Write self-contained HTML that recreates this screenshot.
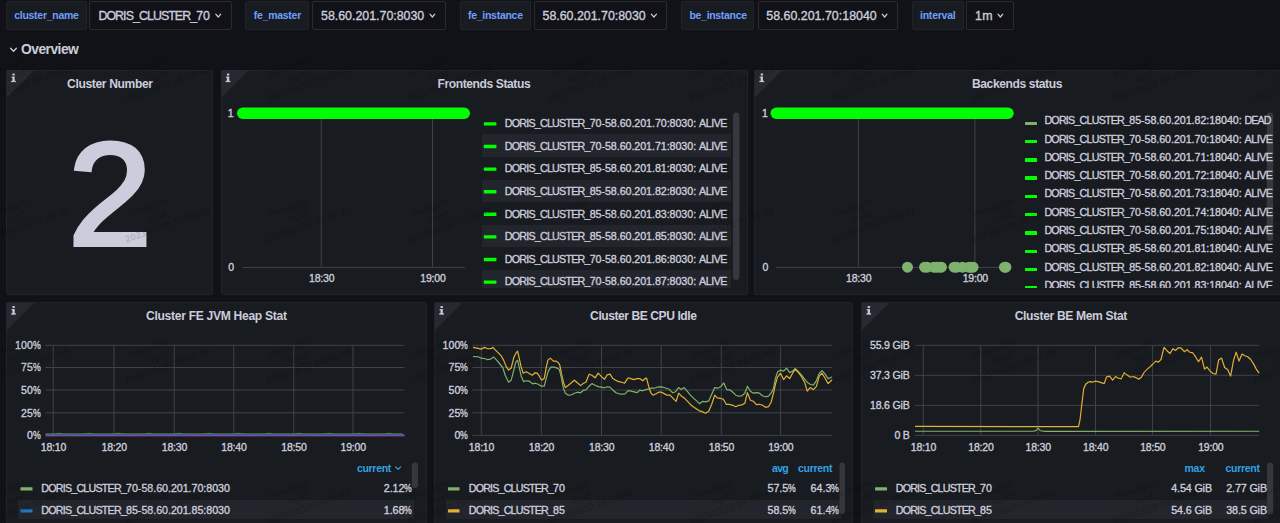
<!DOCTYPE html>
<html lang="en"><head><meta charset="utf-8"><title>Doris Overview</title>
<style>
html,body{margin:0;padding:0;background:#111217}
body{width:1280px;height:523px;overflow:hidden;position:relative;font-family:"Liberation Sans",Arial,sans-serif;color:#ccccdc}
.t{position:absolute;white-space:pre;margin:0;padding:0}
.t.c{width:400px;text-align:center}
.t span{display:inline-block}
.t span.pc{transform-origin:0 50%}
svg.ov{position:absolute;left:0;top:0;width:1280px;height:523px;pointer-events:none}
.wm{position:absolute;width:120px;height:34.5px;text-align:center;transform:rotate(-19.7deg);color:rgba(0,0,0,.14);font-size:9.6px;line-height:11.5px;white-space:nowrap;pointer-events:none}
.wm b{display:block;position:relative}
#be{position:absolute;left:1020px;top:105px;width:260px;height:182.6px;overflow:hidden}

.f0{font-size:10.5px;height:16px;line-height:16px;font-weight:700;color:#6e9fff}
.f1{font-size:12.4px;height:16px;line-height:16px;-webkit-text-stroke:0.35px currentColor}
.f2{font-size:13.8px;height:18px;line-height:18px;font-weight:700}
.f3{font-size:12.1px;height:16px;line-height:16px;font-weight:700}
.f4{font-size:146.5px;height:160px;line-height:160px;-webkit-text-stroke:4px currentColor}
.f5{font-size:10.5px;height:16px;line-height:16px;-webkit-text-stroke:0.35px currentColor}
.f6{font-size:10.7px;height:16px;line-height:16px;-webkit-text-stroke:0.35px currentColor}
.f7{font-size:10.5px;height:16px;line-height:16px;font-weight:700;color:#33a2e5}
</style></head>
<body>
<div style="position:absolute;left:5.65px;top:1.25px;width:81.05px;height:28.50px;box-sizing:border-box;background:#181b1f;border:1px solid #202329;border-radius:2px"></div>
<div style="position:absolute;left:89.40px;top:1.25px;width:142.60px;height:28.50px;box-sizing:border-box;background:#111217;border:1px solid #292b31;border-radius:2px"></div>
<div style="position:absolute;left:244.90px;top:1.25px;width:64.10px;height:28.50px;box-sizing:border-box;background:#181b1f;border:1px solid #202329;border-radius:2px"></div>
<div style="position:absolute;left:311.90px;top:1.25px;width:134.60px;height:28.50px;box-sizing:border-box;background:#111217;border:1px solid #292b31;border-radius:2px"></div>
<div style="position:absolute;left:459.90px;top:1.25px;width:70.85px;height:28.50px;box-sizing:border-box;background:#181b1f;border:1px solid #202329;border-radius:2px"></div>
<div style="position:absolute;left:533.65px;top:1.25px;width:133.85px;height:28.50px;box-sizing:border-box;background:#111217;border:1px solid #292b31;border-radius:2px"></div>
<div style="position:absolute;left:681.15px;top:1.25px;width:73.35px;height:28.50px;box-sizing:border-box;background:#181b1f;border:1px solid #202329;border-radius:2px"></div>
<div style="position:absolute;left:757.65px;top:1.25px;width:140.85px;height:28.50px;box-sizing:border-box;background:#111217;border:1px solid #292b31;border-radius:2px"></div>
<div style="position:absolute;left:911.90px;top:1.25px;width:51.85px;height:28.50px;box-sizing:border-box;background:#181b1f;border:1px solid #202329;border-radius:2px"></div>
<div style="position:absolute;left:965.90px;top:1.25px;width:47.85px;height:28.50px;box-sizing:border-box;background:#111217;border:1px solid #292b31;border-radius:2px"></div>
<div style="position:absolute;left:6.00px;top:69.60px;width:207.00px;height:225.80px;box-sizing:border-box;background:#181b1f;border:1px solid #202328;border-radius:2px"></div>
<div style="position:absolute;left:220.50px;top:69.60px;width:527.00px;height:225.80px;box-sizing:border-box;background:#181b1f;border:1px solid #202328;border-radius:2px"></div>
<div style="position:absolute;left:754.25px;top:69.60px;width:535.75px;height:225.80px;box-sizing:border-box;background:#181b1f;border:1px solid #202328;border-radius:2px"></div>
<div style="position:absolute;left:6.00px;top:302.10px;width:421.00px;height:257.90px;box-sizing:border-box;background:#181b1f;border:1px solid #202328;border-radius:2px"></div>
<div style="position:absolute;left:434.10px;top:302.10px;width:419.15px;height:257.90px;box-sizing:border-box;background:#181b1f;border:1px solid #202328;border-radius:2px"></div>
<div style="position:absolute;left:861.25px;top:302.10px;width:428.75px;height:257.90px;box-sizing:border-box;background:#181b1f;border:1px solid #202328;border-radius:2px"></div>
<div style="position:absolute;left:482.20px;top:134.40px;width:249.10px;height:22.60px;background:#22252b"></div>
<div style="position:absolute;left:482.20px;top:179.60px;width:249.10px;height:22.60px;background:#22252b"></div>
<div style="position:absolute;left:482.20px;top:224.80px;width:249.10px;height:22.60px;background:#22252b"></div>
<div style="position:absolute;left:482.20px;top:270.00px;width:249.10px;height:17.80px;background:#22252b"></div>
<div style="position:absolute;left:18.00px;top:500.30px;width:395.75px;height:19.20px;background:#22252b"></div>
<div style="position:absolute;left:445.50px;top:500.30px;width:395.00px;height:19.20px;background:#22252b"></div>
<div style="position:absolute;left:873.00px;top:500.30px;width:394.50px;height:19.20px;background:#22252b"></div>
<svg class="ov" viewBox="0 0 1280 523">
<path d="M215.75 14.20 L218.25 17.00 L220.75 14.20" fill="none" stroke="#ccccdc" stroke-width="1.2" stroke-linecap="round" stroke-linejoin="round"/>
<path d="M430.00 14.20 L432.38 17.00 L434.75 14.20" fill="none" stroke="#ccccdc" stroke-width="1.2" stroke-linecap="round" stroke-linejoin="round"/>
<path d="M651.25 14.20 L653.88 17.00 L656.50 14.20" fill="none" stroke="#ccccdc" stroke-width="1.2" stroke-linecap="round" stroke-linejoin="round"/>
<path d="M882.25 14.20 L884.62 17.00 L887.00 14.20" fill="none" stroke="#ccccdc" stroke-width="1.2" stroke-linecap="round" stroke-linejoin="round"/>
<path d="M998.00 14.20 L1000.38 17.00 L1002.75 14.20" fill="none" stroke="#ccccdc" stroke-width="1.2" stroke-linecap="round" stroke-linejoin="round"/>
<path d="M10.6 48.3 L13.5 51.3 L16.4 48.3" fill="none" stroke="#ccccdc" stroke-width="1.3" stroke-linecap="round" stroke-linejoin="round"/>
<path d="M6.50 70.10 h28 l-28 28 z" fill="#262930"/>
<g fill="#c7c8d4" transform="translate(11.10 73.40)"><rect x="1.3" y="0" width="2.4" height="2.2" rx="0.6"/><rect x="0.3" y="3.3" width="3.3" height="1.1"/><rect x="1.3" y="3.3" width="2.3" height="5"/><rect x="0" y="7.4" width="4.8" height="1.3"/></g>
<path d="M221.00 70.10 h28 l-28 28 z" fill="#262930"/>
<g fill="#c7c8d4" transform="translate(225.60 73.40)"><rect x="1.3" y="0" width="2.4" height="2.2" rx="0.6"/><rect x="0.3" y="3.3" width="3.3" height="1.1"/><rect x="1.3" y="3.3" width="2.3" height="5"/><rect x="0" y="7.4" width="4.8" height="1.3"/></g>
<path d="M754.75 70.10 h28 l-28 28 z" fill="#262930"/>
<g fill="#c7c8d4" transform="translate(759.35 73.40)"><rect x="1.3" y="0" width="2.4" height="2.2" rx="0.6"/><rect x="0.3" y="3.3" width="3.3" height="1.1"/><rect x="1.3" y="3.3" width="2.3" height="5"/><rect x="0" y="7.4" width="4.8" height="1.3"/></g>
<path d="M6.50 302.60 h28 l-28 28 z" fill="#262930"/>
<g fill="#c7c8d4" transform="translate(11.10 305.90)"><rect x="1.3" y="0" width="2.4" height="2.2" rx="0.6"/><rect x="0.3" y="3.3" width="3.3" height="1.1"/><rect x="1.3" y="3.3" width="2.3" height="5"/><rect x="0" y="7.4" width="4.8" height="1.3"/></g>
<path d="M434.60 302.60 h28 l-28 28 z" fill="#262930"/>
<g fill="#c7c8d4" transform="translate(439.20 305.90)"><rect x="1.3" y="0" width="2.4" height="2.2" rx="0.6"/><rect x="0.3" y="3.3" width="3.3" height="1.1"/><rect x="1.3" y="3.3" width="2.3" height="5"/><rect x="0" y="7.4" width="4.8" height="1.3"/></g>
<path d="M861.75 302.60 h28 l-28 28 z" fill="#262930"/>
<g fill="#c7c8d4" transform="translate(866.35 305.90)"><rect x="1.3" y="0" width="2.4" height="2.2" rx="0.6"/><rect x="0.3" y="3.3" width="3.3" height="1.1"/><rect x="1.3" y="3.3" width="2.3" height="5"/><rect x="0" y="7.4" width="4.8" height="1.3"/></g>
<rect x="320.75" y="113" width="1" height="154.5" fill="#3f4247"/>
<rect x="432.00" y="113" width="1" height="154.5" fill="#3f4247"/>
<rect x="242.20" y="266.9" width="222.80" height="1" fill="#3f4247"/>
<rect x="237.00" y="107.5" width="233.00" height="11.5" rx="5.75" fill="#00ff00"/>
<rect x="857.80" y="113" width="1" height="154.5" fill="#3f4247"/>
<rect x="974.40" y="113" width="1" height="154.5" fill="#3f4247"/>
<rect x="775.70" y="266.9" width="233.05" height="1" fill="#3f4247"/>
<rect x="770.50" y="107.5" width="243.25" height="11.5" rx="5.75" fill="#00ff00"/>
<rect x="483.8" y="122.20" width="12.6" height="3.4" rx="0.5" fill="#00ff00"/>
<rect x="483.8" y="144.80" width="12.6" height="3.4" rx="0.5" fill="#00ff00"/>
<rect x="483.8" y="167.40" width="12.6" height="3.4" rx="0.5" fill="#00ff00"/>
<rect x="483.8" y="190.00" width="12.6" height="3.4" rx="0.5" fill="#00ff00"/>
<rect x="483.8" y="212.60" width="12.6" height="3.4" rx="0.5" fill="#00ff00"/>
<rect x="483.8" y="235.20" width="12.6" height="3.4" rx="0.5" fill="#00ff00"/>
<rect x="483.8" y="257.80" width="12.6" height="3.4" rx="0.5" fill="#00ff00"/>
<rect x="483.8" y="280.40" width="12.6" height="3.4" rx="0.5" fill="#00ff00"/>
<rect x="733" y="112.5" width="6.4" height="167.4" rx="3.2" fill="#35383d"/>
<circle cx="907.50" cy="267.2" r="5.5" fill="#7eb26d"/>
<circle cx="924.60" cy="267.2" r="5.5" fill="#7eb26d"/>
<circle cx="927.20" cy="267.2" r="5.5" fill="#7eb26d"/>
<circle cx="933.80" cy="267.2" r="5.5" fill="#7eb26d"/>
<circle cx="936.40" cy="267.2" r="5.5" fill="#7eb26d"/>
<circle cx="939.00" cy="267.2" r="5.5" fill="#7eb26d"/>
<circle cx="941.40" cy="267.2" r="5.5" fill="#7eb26d"/>
<circle cx="954.10" cy="267.2" r="5.5" fill="#7eb26d"/>
<circle cx="956.70" cy="267.2" r="5.5" fill="#7eb26d"/>
<circle cx="962.60" cy="267.2" r="5.5" fill="#7eb26d"/>
<circle cx="968.80" cy="267.2" r="5.5" fill="#7eb26d"/>
<circle cx="971.00" cy="267.2" r="5.5" fill="#7eb26d"/>
<circle cx="973.10" cy="267.2" r="5.5" fill="#7eb26d"/>
<circle cx="1004.50" cy="267.2" r="5.5" fill="#7eb26d"/>
<circle cx="1005.90" cy="267.2" r="5.5" fill="#7eb26d"/>
<rect x="1266.8" y="112.5" width="6.4" height="128.4" rx="3.2" fill="#35383d"/>
<rect x="45.50" y="344.80" width="359.00" height="1" fill="#3f4247"/>
<rect x="45.50" y="367.00" width="359.00" height="1" fill="#3f4247"/>
<rect x="45.50" y="389.50" width="359.00" height="1" fill="#3f4247"/>
<rect x="45.50" y="412.30" width="359.00" height="1" fill="#3f4247"/>
<rect x="45.50" y="434.90" width="359.00" height="1" fill="#3f4247"/>
<rect x="52.75" y="345.30" width="1" height="90.10" fill="#3f4247"/>
<rect x="113.50" y="345.30" width="1" height="90.10" fill="#3f4247"/>
<rect x="173.75" y="345.30" width="1" height="90.10" fill="#3f4247"/>
<rect x="233.25" y="345.30" width="1" height="90.10" fill="#3f4247"/>
<rect x="293.25" y="345.30" width="1" height="90.10" fill="#3f4247"/>
<rect x="352.50" y="345.30" width="1" height="90.10" fill="#3f4247"/>
<rect x="472.50" y="344.80" width="359.50" height="1" fill="#3f4247"/>
<rect x="472.50" y="367.00" width="359.50" height="1" fill="#3f4247"/>
<rect x="472.50" y="389.50" width="359.50" height="1" fill="#3f4247"/>
<rect x="472.50" y="412.30" width="359.50" height="1" fill="#3f4247"/>
<rect x="472.50" y="434.90" width="359.50" height="1" fill="#3f4247"/>
<rect x="480.80" y="345.30" width="1" height="90.10" fill="#3f4247"/>
<rect x="540.80" y="345.30" width="1" height="90.10" fill="#3f4247"/>
<rect x="601.00" y="345.30" width="1" height="90.10" fill="#3f4247"/>
<rect x="660.70" y="345.30" width="1" height="90.10" fill="#3f4247"/>
<rect x="720.80" y="345.30" width="1" height="90.10" fill="#3f4247"/>
<rect x="780.10" y="345.30" width="1" height="90.10" fill="#3f4247"/>
<rect x="915.00" y="344.80" width="344.25" height="1" fill="#3f4247"/>
<rect x="915.00" y="374.80" width="344.25" height="1" fill="#3f4247"/>
<rect x="915.00" y="404.90" width="344.25" height="1" fill="#3f4247"/>
<rect x="915.00" y="434.90" width="344.25" height="1" fill="#3f4247"/>
<rect x="922.75" y="345.30" width="1" height="90.10" fill="#3f4247"/>
<rect x="980.25" y="345.30" width="1" height="90.10" fill="#3f4247"/>
<rect x="1037.50" y="345.30" width="1" height="90.10" fill="#3f4247"/>
<rect x="1095.00" y="345.30" width="1" height="90.10" fill="#3f4247"/>
<rect x="1152.10" y="345.30" width="1" height="90.10" fill="#3f4247"/>
<rect x="1210.10" y="345.30" width="1" height="90.10" fill="#3f4247"/>
<path d="M45.5 433.9 L48.5 433.9 L51.5 433.9 L54.5 433.9 L57.5 433.4 L60.5 433.4 L63.5 433.9 L66.5 433.9 L69.5 433.9 L72.5 433.9 L75.5 433.9 L78.5 433.9 L81.5 433.9 L84.5 433.9 L87.5 433.4 L90.5 433.4 L93.5 433.9 L96.5 433.9 L99.5 433.9 L102.5 433.9 L105.5 433.9 L108.5 433.9 L111.5 433.9 L114.5 433.9 L117.5 433.4 L120.5 433.4 L123.5 433.9 L126.5 433.9 L129.5 433.9 L132.5 433.9 L135.5 433.9 L138.5 433.9 L141.5 433.9 L144.5 433.9 L147.5 433.4 L150.5 433.4 L153.5 433.9 L156.5 433.9 L159.5 433.9 L162.5 433.9 L165.5 433.9 L168.5 433.9 L171.5 433.9 L174.5 433.9 L177.5 433.4 L180.5 433.4 L183.5 433.9 L186.5 433.9 L189.5 433.9 L192.5 433.9 L195.5 433.9 L198.5 433.9 L201.5 433.9 L204.5 433.9 L207.5 433.4 L210.5 433.4 L213.5 433.9 L216.5 433.9 L219.5 433.9 L222.5 433.9 L225.5 433.9 L228.5 433.9 L231.5 433.9 L234.5 433.9 L237.5 433.4 L240.5 433.4 L243.5 433.9 L246.5 433.9 L249.5 433.9 L252.5 433.9 L255.5 433.9 L258.5 433.9 L261.5 433.9 L264.5 433.9 L267.5 433.4 L270.5 433.4 L273.5 433.9 L276.5 433.9 L279.5 433.9 L282.5 433.9 L285.5 433.9 L288.5 433.9 L291.5 433.9 L294.5 433.9 L297.5 433.4 L300.5 433.4 L303.5 433.9 L306.5 433.9 L309.5 433.9 L312.5 433.9 L315.5 433.9 L318.5 433.9 L321.5 433.9 L324.5 433.9 L327.5 433.4 L330.5 433.4 L333.5 433.9 L336.5 433.9 L339.5 433.9 L342.5 433.9 L345.5 433.9 L348.5 433.9 L351.5 433.9 L354.5 433.9 L357.5 433.4 L360.5 433.4 L363.5 433.9 L366.5 433.9 L369.5 433.9 L372.5 433.9 L375.5 433.9 L378.5 433.9 L381.5 433.9 L384.5 433.9 L387.5 433.4 L390.5 433.4 L393.5 433.9 L396.5 433.9 L399.5 433.9 L402.5 433.9" stroke="#5f9c6e" stroke-width="0.9" fill="none"/>
<path d="M45.5 434.7 L404.5 434.7" stroke="#1f78c1" stroke-width="1.1" fill="none"/>
<path d="M45.5 435.8 L404.5 435.8" stroke="#ba43a9" stroke-width="1" fill="none"/>
<path d="M473.0 356.7 L478.1 356.7 L481.1 358.1 L484.5 358.5 L487.7 359.7 L490.7 359.1 L493.7 357.1 L496.7 360.1 L499.5 363.5 L502.8 367.5 L505.2 375.2 L508.6 382.2 L511.2 380.2 L513.8 370.1 L515.8 362.1 L517.6 360.1 L519.2 367.1 L521.2 376.2 L523.6 381.6 L526.2 380.8 L529.3 381.2 L532.7 383.8 L535.3 383.2 L538.3 384.2 L541.3 386.2 L544.3 386.2 L546.3 378.2 L548.3 371.1 L550.9 367.1 L554.0 367.1 L557.0 368.1 L559.4 369.5 L561.4 378.2 L563.4 388.2 L565.4 393.2 L568.4 395.2 L571.4 394.8 L574.4 393.2 L577.4 392.2 L580.5 392.8 L583.5 390.2 L585.9 389.8 L589.1 386.2 L591.9 383.6 L595.1 385.2 L598.1 386.6 L601.5 387.2 L604.6 387.8 L607.2 386.8 L610.0 387.2 L613.0 390.2 L616.0 392.8 L619.0 393.8 L622.0 394.2 L625.0 393.8 L628.1 390.6 L631.1 391.2 L634.1 391.8 L637.1 392.6 L639.7 390.2 L642.7 390.8 L645.7 389.6 L645.0 389.8 L648.0 389.2 L651.0 388.2 L654.0 388.2 L657.0 387.2 L660.1 386.8 L663.1 387.2 L666.1 388.2 L669.1 389.2 L672.7 392.8 L675.5 391.8 L678.5 387.6 L681.1 389.6 L684.2 387.6 L687.2 391.2 L690.2 394.8 L693.2 397.9 L696.6 400.9 L699.6 403.7 L702.6 401.3 L705.6 401.9 L708.7 400.9 L711.7 394.2 L714.7 387.6 L717.7 388.2 L720.7 386.8 L723.7 382.8 L726.7 389.6 L729.7 389.8 L732.8 392.2 L735.8 395.2 L738.8 396.2 L741.8 395.8 L744.8 393.2 L747.4 386.2 L750.4 391.2 L753.4 393.2 L756.4 392.6 L759.5 393.2 L762.5 395.8 L765.5 396.8 L768.5 396.2 L771.1 393.2 L773.5 388.2 L775.5 378.2 L777.5 372.1 L780.5 370.1 L783.6 371.1 L786.6 368.1 L789.6 372.6 L792.6 371.1 L795.2 368.5 L798.0 371.1 L801.2 374.6 L804.6 379.2 L807.2 382.2 L810.1 384.2 L813.3 385.2 L816.3 380.8 L819.3 373.2 L822.1 370.7 L825.1 374.2 L828.1 378.6 L831.1 377.6 L832.1 376.8" fill="none" stroke="#7eb26d" stroke-width="1.2" stroke-linejoin="round"/>
<path d="M473.0 347.4 L477.0 348.1 L481.1 349.1 L484.5 347.4 L487.7 348.7 L490.7 348.7 L493.1 347.4 L495.5 350.1 L498.1 352.7 L501.1 355.7 L503.6 360.1 L506.0 366.1 L508.6 370.1 L511.2 368.1 L513.8 357.5 L516.2 352.7 L517.6 351.1 L519.2 358.1 L521.2 367.1 L523.2 373.2 L526.2 371.7 L529.3 373.6 L532.3 375.2 L534.9 372.8 L537.3 373.2 L539.3 376.2 L541.7 380.2 L544.3 378.2 L546.3 367.1 L547.9 360.1 L550.3 358.1 L553.4 361.1 L555.8 361.1 L558.4 362.7 L559.8 365.1 L561.4 373.2 L563.4 382.2 L565.4 387.6 L568.4 385.2 L571.4 382.8 L574.4 380.2 L577.4 382.8 L580.5 385.6 L583.5 383.2 L585.9 382.2 L589.1 374.2 L591.9 375.2 L595.1 377.8 L598.1 373.2 L601.5 376.6 L604.6 379.2 L607.2 374.8 L610.0 374.2 L612.6 378.2 L615.6 380.2 L618.6 381.6 L621.6 382.2 L624.6 383.2 L628.1 377.8 L630.7 378.6 L633.7 379.6 L636.7 378.6 L639.7 378.6 L642.7 380.8 L645.7 378.2 L645.0 378.6 L646.6 378.2 L648.6 386.2 L651.0 393.2 L653.0 395.2 L656.0 393.8 L658.7 392.2 L661.5 392.2 L664.1 393.6 L667.1 395.2 L670.1 395.2 L673.1 398.3 L676.1 401.3 L678.7 393.2 L681.5 396.2 L684.6 398.3 L687.6 401.3 L690.6 404.7 L693.6 406.9 L696.6 408.9 L699.6 410.9 L702.6 411.9 L705.6 413.3 L708.7 411.3 L711.7 404.3 L714.7 395.2 L717.3 397.9 L720.3 398.3 L723.3 399.3 L726.3 404.3 L729.3 404.3 L732.8 405.3 L735.8 406.7 L738.8 405.3 L741.8 404.9 L744.8 403.3 L747.4 392.6 L750.4 400.3 L753.4 401.3 L756.4 404.7 L759.5 404.3 L762.5 405.3 L765.5 407.3 L768.5 406.7 L771.1 402.3 L773.5 393.2 L775.5 384.2 L777.5 377.2 L780.5 373.2 L783.6 379.6 L786.6 375.8 L789.6 378.6 L792.6 373.2 L795.2 369.5 L798.0 372.1 L801.2 376.2 L804.6 382.2 L807.2 391.2 L810.1 387.6 L813.3 389.6 L816.3 386.6 L819.3 376.2 L822.1 373.2 L825.1 378.2 L828.1 383.6 L831.1 380.8 L832.1 379.6" fill="none" stroke="#e2b036" stroke-width="1.2" stroke-linejoin="round"/>
<path d="M915.0 431.3 L1033.0 431.3 L1036.0 430.6 L1038.0 428.2 L1040.5 430.8 L1045.0 431.4 L1259.2 431.3" fill="none" stroke="#7eb26d" stroke-width="1.1" stroke-linejoin="round"/>
<path d="M915.0 426.3 L1078.5 426.7 L1080.1 419.3 L1081.7 405.3 L1083.7 388.8 L1085.7 384.2 L1088.1 382.2 L1090.1 381.6 L1092.5 382.2 L1095.1 381.2 L1098.1 381.6 L1101.1 382.6 L1104.2 383.6 L1106.6 376.8 L1109.6 376.1 L1112.6 380.2 L1115.6 376.5 L1118.2 378.2 L1121.2 378.8 L1124.2 372.7 L1127.2 375.1 L1130.3 377.2 L1133.3 376.5 L1135.9 377.6 L1138.7 379.2 L1141.3 377.2 L1144.3 372.1 L1147.3 369.1 L1150.3 366.5 L1153.3 363.7 L1155.9 361.1 L1158.4 362.1 L1161.0 359.5 L1164.0 347.4 L1167.0 350.7 L1170.0 353.5 L1173.0 348.6 L1175.4 350.5 L1178.4 347.6 L1181.0 348.0 L1184.4 351.7 L1187.1 349.7 L1190.1 352.5 L1192.5 352.7 L1195.5 356.7 L1198.5 361.7 L1201.5 357.1 L1204.5 369.1 L1207.1 367.1 L1210.1 371.1 L1213.0 373.5 L1216.0 374.1 L1218.6 360.1 L1221.6 358.1 L1224.6 367.5 L1227.6 369.5 L1230.6 376.1 L1233.6 360.1 L1236.2 352.1 L1239.0 361.1 L1242.1 354.1 L1244.7 355.7 L1247.7 356.7 L1250.7 359.5 L1253.7 364.1 L1256.3 369.1 L1259.1 373.1" fill="none" stroke="#e2b036" stroke-width="1.2" stroke-linejoin="round"/>
<rect x="20.50" y="487.20" width="12.00" height="3.4" rx="0.5" fill="#7eb26d"/>
<rect x="20.50" y="509.20" width="12.00" height="3.4" rx="0.5" fill="#1f78c1"/>
<rect x="411.75" y="462.50" width="6.25" height="25.50" rx="2.7" fill="#34373c"/>
<path d="M395.6 466.9 L398.1 469.4 L400.6 466.9" fill="none" stroke="#33a2e5" stroke-width="1.2" stroke-linecap="round" stroke-linejoin="round"/>
<rect x="448.00" y="487.20" width="11.50" height="3.4" rx="0.5" fill="#7eb26d"/>
<rect x="448.00" y="509.20" width="11.50" height="3.4" rx="0.5" fill="#e2b036"/>
<rect x="839.50" y="462.50" width="5.50" height="51.50" rx="2.7" fill="#34373c"/>
<rect x="875.00" y="487.20" width="12.00" height="3.4" rx="0.5" fill="#7eb26d"/>
<rect x="875.00" y="509.20" width="12.00" height="3.4" rx="0.5" fill="#e2b036"/>
<rect x="1267.00" y="462.50" width="6.20" height="52.00" rx="2.7" fill="#34373c"/>
</svg>
<div class="t f0" style="top:6.50px;left:14.20px"><span style="letter-spacing:-0.273px">cluster_name</span></div>
<div class="t f1" style="top:7.60px;left:98.40px"><span style="letter-spacing:-0.935px">DORIS_CLUSTER_</span><span style="letter-spacing:0.035px">70</span></div>
<div class="t f0" style="top:6.50px;left:253.75px"><span style="letter-spacing:-0.266px">fe_master</span></div>
<div class="t f1" style="top:7.60px;left:321.00px"><span style="letter-spacing:-0.007px">58.60.201.70:8030</span></div>
<div class="t f0" style="top:6.50px;left:468.00px"><span style="letter-spacing:-0.278px">fe_instance</span></div>
<div class="t f1" style="top:7.60px;left:542.50px"><span style="letter-spacing:-0.007px">58.60.201.70:8030</span></div>
<div class="t f0" style="top:6.50px;left:689.50px"><span style="letter-spacing:-0.320px">be_instance</span></div>
<div class="t f1" style="top:7.60px;left:766.25px"><span style="letter-spacing:0.015px">58.60.201.70:18040</span></div>
<div class="t f0" style="top:6.50px;left:920.00px"><span style="letter-spacing:-0.230px">interval</span></div>
<div class="t f1" style="top:7.60px;left:975.00px"><span style="letter-spacing:0.281px">1m</span></div>
<div class="t f2" style="top:41.10px;left:21.10px"><span style="letter-spacing:-0.523px">Overview</span></div>
<div class="t f3 c" style="top:75.80px;left:-90.18px"><span style="letter-spacing:-0.364px">Cluster Number</span></div>
<div class="t f3 c" style="top:75.80px;left:283.89px"><span style="letter-spacing:-0.414px">Frontends Status</span></div>
<div class="t f3 c" style="top:75.80px;left:817.00px"><span style="letter-spacing:-0.402px">Backends status</span></div>
<div class="t f3 c" style="top:308.30px;left:16.35px"><span style="letter-spacing:-0.298px">Cluster FE JVM Heap Stat</span></div>
<div class="t f3 c" style="top:308.30px;left:443.27px"><span style="letter-spacing:-0.454px">Cluster BE CPU Idle</span></div>
<div class="t f3 c" style="top:308.30px;left:870.82px"><span style="letter-spacing:-0.353px">Cluster BE Mem Stat</span></div>
<div class="t f4 c" style="top:114.20px;left:-90.40px;transform:scaleX(1.03)"><span>2</span></div>
<div class="t f5" style="top:105.20px;right:1046.40px"><span>1</span></div>
<div class="t f5" style="top:259.00px;right:1045.90px"><span>0</span></div>
<div class="t f5 c" style="top:270.10px;left:121.65px"><span style="letter-spacing:-0.195px">18:30</span></div>
<div class="t f5 c" style="top:270.10px;left:232.90px"><span style="letter-spacing:-0.195px">19:00</span></div>
<div class="t f5" style="top:105.20px;right:512.20px"><span>1</span></div>
<div class="t f5" style="top:259.00px;right:511.70px"><span>0</span></div>
<div class="t f5 c" style="top:270.10px;left:658.70px"><span style="letter-spacing:-0.195px">18:30</span></div>
<div class="t f5 c" style="top:270.10px;left:775.30px"><span style="letter-spacing:-0.195px">19:00</span></div>
<div class="t f6" style="top:115.10px;left:504.80px"><span style="letter-spacing:-0.767px">DORIS_CLUSTER_</span><span style="letter-spacing:-0.057px">70-58.60.201.70:8030: </span><span style="letter-spacing:-0.448px">ALIVE</span></div>
<div class="t f6" style="top:137.70px;left:504.80px"><span style="letter-spacing:-0.767px">DORIS_CLUSTER_</span><span style="letter-spacing:-0.057px">70-58.60.201.71:8030: </span><span style="letter-spacing:-0.448px">ALIVE</span></div>
<div class="t f6" style="top:160.30px;left:504.80px"><span style="letter-spacing:-0.767px">DORIS_CLUSTER_</span><span style="letter-spacing:-0.057px">85-58.60.201.81:8030: </span><span style="letter-spacing:-0.448px">ALIVE</span></div>
<div class="t f6" style="top:182.90px;left:504.80px"><span style="letter-spacing:-0.767px">DORIS_CLUSTER_</span><span style="letter-spacing:-0.057px">85-58.60.201.82:8030: </span><span style="letter-spacing:-0.448px">ALIVE</span></div>
<div class="t f6" style="top:205.50px;left:504.80px"><span style="letter-spacing:-0.767px">DORIS_CLUSTER_</span><span style="letter-spacing:-0.057px">85-58.60.201.83:8030: </span><span style="letter-spacing:-0.448px">ALIVE</span></div>
<div class="t f6" style="top:228.10px;left:504.80px"><span style="letter-spacing:-0.767px">DORIS_CLUSTER_</span><span style="letter-spacing:-0.057px">85-58.60.201.85:8030: </span><span style="letter-spacing:-0.448px">ALIVE</span></div>
<div class="t f6" style="top:250.70px;left:504.80px"><span style="letter-spacing:-0.767px">DORIS_CLUSTER_</span><span style="letter-spacing:-0.057px">70-58.60.201.86:8030: </span><span style="letter-spacing:-0.448px">ALIVE</span></div>
<div class="t f6" style="top:273.30px;left:504.80px"><span style="letter-spacing:-0.767px">DORIS_CLUSTER_</span><span style="letter-spacing:-0.057px">70-58.60.201.87:8030: </span><span style="letter-spacing:-0.448px">ALIVE</span></div>
<div class="t f5" style="top:337.00px;right:1239.30px"><span style="letter-spacing:0.120px">100</span><span class="pc" style="transform:scaleX(0.832);margin-right:-1.57px">%</span></div>
<div class="t f5" style="top:359.20px;right:1239.30px"><span style="letter-spacing:0.120px">75</span><span class="pc" style="transform:scaleX(0.832);margin-right:-1.57px">%</span></div>
<div class="t f5" style="top:381.70px;right:1239.30px"><span style="letter-spacing:0.120px">50</span><span class="pc" style="transform:scaleX(0.832);margin-right:-1.57px">%</span></div>
<div class="t f5" style="top:404.50px;right:1239.30px"><span style="letter-spacing:0.120px">25</span><span class="pc" style="transform:scaleX(0.832);margin-right:-1.57px">%</span></div>
<div class="t f5" style="top:427.10px;right:1239.30px"><span style="letter-spacing:0.120px">0</span><span class="pc" style="transform:scaleX(0.832);margin-right:-1.57px">%</span></div>
<div class="t f5 c" style="top:438.60px;left:-146.55px"><span style="letter-spacing:-0.195px">18:10</span></div>
<div class="t f5 c" style="top:438.60px;left:-85.80px"><span style="letter-spacing:-0.195px">18:20</span></div>
<div class="t f5 c" style="top:438.60px;left:-25.55px"><span style="letter-spacing:-0.195px">18:30</span></div>
<div class="t f5 c" style="top:438.60px;left:33.95px"><span style="letter-spacing:-0.195px">18:40</span></div>
<div class="t f5 c" style="top:438.60px;left:93.95px"><span style="letter-spacing:-0.195px">18:50</span></div>
<div class="t f5 c" style="top:438.60px;left:153.20px"><span style="letter-spacing:-0.195px">19:00</span></div>
<div class="t f5" style="top:337.00px;right:811.80px"><span style="letter-spacing:0.120px">100</span><span class="pc" style="transform:scaleX(0.832);margin-right:-1.57px">%</span></div>
<div class="t f5" style="top:359.20px;right:811.80px"><span style="letter-spacing:0.120px">75</span><span class="pc" style="transform:scaleX(0.832);margin-right:-1.57px">%</span></div>
<div class="t f5" style="top:381.70px;right:811.80px"><span style="letter-spacing:0.120px">50</span><span class="pc" style="transform:scaleX(0.832);margin-right:-1.57px">%</span></div>
<div class="t f5" style="top:404.50px;right:811.80px"><span style="letter-spacing:0.120px">25</span><span class="pc" style="transform:scaleX(0.832);margin-right:-1.57px">%</span></div>
<div class="t f5" style="top:427.10px;right:811.80px"><span style="letter-spacing:0.120px">0</span><span class="pc" style="transform:scaleX(0.832);margin-right:-1.57px">%</span></div>
<div class="t f5 c" style="top:438.60px;left:281.50px"><span style="letter-spacing:-0.195px">18:10</span></div>
<div class="t f5 c" style="top:438.60px;left:341.50px"><span style="letter-spacing:-0.195px">18:20</span></div>
<div class="t f5 c" style="top:438.60px;left:401.70px"><span style="letter-spacing:-0.195px">18:30</span></div>
<div class="t f5 c" style="top:438.60px;left:461.40px"><span style="letter-spacing:-0.195px">18:40</span></div>
<div class="t f5 c" style="top:438.60px;left:521.50px"><span style="letter-spacing:-0.195px">18:50</span></div>
<div class="t f5 c" style="top:438.60px;left:580.80px"><span style="letter-spacing:-0.195px">19:00</span></div>
<div class="t f5" style="top:337.00px;right:370.46px"><span style="letter-spacing:-0.160px">55.9 GiB</span></div>
<div class="t f5" style="top:367.00px;right:370.46px"><span style="letter-spacing:-0.160px">37.3 GiB</span></div>
<div class="t f5" style="top:397.10px;right:370.46px"><span style="letter-spacing:-0.160px">18.6 GiB</span></div>
<div class="t f5" style="top:427.10px;right:370.58px"><span style="letter-spacing:-0.281px">0 B</span></div>
<div class="t f5 c" style="top:438.60px;left:723.45px"><span style="letter-spacing:-0.195px">18:10</span></div>
<div class="t f5 c" style="top:438.60px;left:780.95px"><span style="letter-spacing:-0.195px">18:20</span></div>
<div class="t f5 c" style="top:438.60px;left:838.20px"><span style="letter-spacing:-0.195px">18:30</span></div>
<div class="t f5 c" style="top:438.60px;left:895.70px"><span style="letter-spacing:-0.195px">18:40</span></div>
<div class="t f5 c" style="top:438.60px;left:952.80px"><span style="letter-spacing:-0.195px">18:50</span></div>
<div class="t f5 c" style="top:438.60px;left:1010.80px"><span style="letter-spacing:-0.195px">19:00</span></div>
<div class="t f6" style="top:480.20px;left:41.25px"><span style="letter-spacing:-0.773px">DORIS_CLUSTER_</span><span style="letter-spacing:-0.035px">70-58.60.201.70:8030</span></div>
<div class="t f6" style="top:502.20px;left:41.25px"><span style="letter-spacing:-0.773px">DORIS_CLUSTER_</span><span style="letter-spacing:-0.035px">85-58.60.201.85:8030</span></div>
<div class="t f7" style="top:460.00px;left:357.00px"><span style="letter-spacing:-0.323px">current</span></div>
<div class="t f6" style="top:480.20px;right:867.90px"><span style="letter-spacing:-0.062px">2.12</span><span class="pc" style="transform:scaleX(0.813);margin-right:-1.78px">%</span></div>
<div class="t f6" style="top:502.20px;right:867.90px"><span style="letter-spacing:-0.062px">1.68</span><span class="pc" style="transform:scaleX(0.813);margin-right:-1.78px">%</span></div>
<div class="t f6" style="top:480.20px;left:468.75px"><span style="letter-spacing:-0.807px">DORIS_CLUSTER_</span><span style="letter-spacing:0.039px">70</span></div>
<div class="t f6" style="top:502.20px;left:468.75px"><span style="letter-spacing:-0.807px">DORIS_CLUSTER_</span><span style="letter-spacing:0.039px">85</span></div>
<div class="t f7" style="top:460.00px;left:772.00px"><span style="letter-spacing:-0.672px">avg</span></div>
<div class="t f7" style="top:460.00px;left:798.00px"><span style="letter-spacing:-0.281px">current</span></div>
<div class="t f6" style="top:480.20px;right:484.20px"><span style="letter-spacing:-0.062px">57.5</span><span class="pc" style="transform:scaleX(0.813);margin-right:-1.78px">%</span></div>
<div class="t f6" style="top:502.20px;right:484.20px"><span style="letter-spacing:-0.062px">58.5</span><span class="pc" style="transform:scaleX(0.813);margin-right:-1.78px">%</span></div>
<div class="t f6" style="top:480.20px;right:440.70px"><span style="letter-spacing:0.011px">64.3</span><span class="pc" style="transform:scaleX(0.824);margin-right:-1.67px">%</span></div>
<div class="t f6" style="top:502.20px;right:440.70px"><span style="letter-spacing:0.011px">61.4</span><span class="pc" style="transform:scaleX(0.824);margin-right:-1.67px">%</span></div>
<div class="t f6" style="top:480.20px;left:895.75px"><span style="letter-spacing:-0.807px">DORIS_CLUSTER_</span><span style="letter-spacing:0.039px">70</span></div>
<div class="t f6" style="top:502.20px;left:895.75px"><span style="letter-spacing:-0.807px">DORIS_CLUSTER_</span><span style="letter-spacing:0.039px">85</span></div>
<div class="t f7" style="top:460.00px;left:1184.50px"><span style="letter-spacing:-0.258px">max</span></div>
<div class="t f7" style="top:460.00px;left:1225.50px"><span style="letter-spacing:-0.281px">current</span></div>
<div class="t f6" style="top:480.20px;right:68.12px"><span style="letter-spacing:-0.121px">4.54 GiB</span></div>
<div class="t f6" style="top:502.20px;right:68.12px"><span style="letter-spacing:-0.121px">54.6 GiB</span></div>
<div class="t f6" style="top:480.20px;right:13.12px"><span style="letter-spacing:-0.121px">2.77 GiB</span></div>
<div class="t f6" style="top:502.20px;right:13.12px"><span style="letter-spacing:-0.121px">38.5 GiB</span></div>
<div id="be">
<div style="position:absolute;left:5.20px;top:16.50px;width:11.9px;height:3.4px;border-radius:0.5px;background:#7eb26d"></div>
<div style="position:absolute;left:5.20px;top:34.81px;width:11.9px;height:3.4px;border-radius:0.5px;background:#00ff00"></div>
<div style="position:absolute;left:5.20px;top:53.12px;width:11.9px;height:3.4px;border-radius:0.5px;background:#00ff00"></div>
<div style="position:absolute;left:5.20px;top:71.43px;width:11.9px;height:3.4px;border-radius:0.5px;background:#00ff00"></div>
<div style="position:absolute;left:5.20px;top:89.74px;width:11.9px;height:3.4px;border-radius:0.5px;background:#00ff00"></div>
<div style="position:absolute;left:5.20px;top:108.05px;width:11.9px;height:3.4px;border-radius:0.5px;background:#00ff00"></div>
<div style="position:absolute;left:5.20px;top:126.36px;width:11.9px;height:3.4px;border-radius:0.5px;background:#00ff00"></div>
<div style="position:absolute;left:5.20px;top:144.67px;width:11.9px;height:3.4px;border-radius:0.5px;background:#00ff00"></div>
<div style="position:absolute;left:5.20px;top:162.98px;width:11.9px;height:3.4px;border-radius:0.5px;background:#00ff00"></div>
<div style="position:absolute;left:5.20px;top:181.29px;width:11.9px;height:3.4px;border-radius:0.5px;background:#00ff00"></div>
<div class="t f6" style="top:7.20px;left:24.40px"><span style="letter-spacing:-0.769px">DORIS_CLUSTER_</span><span style="letter-spacing:-0.053px">85-58.60.201.82:18040: </span><span style="letter-spacing:-0.877px">DEAD</span></div>
<div class="t f6" style="top:25.51px;left:24.40px"><span style="letter-spacing:-0.770px">DORIS_CLUSTER_</span><span style="letter-spacing:-0.054px">70-58.60.201.70:18040: </span><span style="letter-spacing:-0.451px">ALIVE</span></div>
<div class="t f6" style="top:43.82px;left:24.40px"><span style="letter-spacing:-0.770px">DORIS_CLUSTER_</span><span style="letter-spacing:-0.054px">70-58.60.201.71:18040: </span><span style="letter-spacing:-0.451px">ALIVE</span></div>
<div class="t f6" style="top:62.13px;left:24.40px"><span style="letter-spacing:-0.770px">DORIS_CLUSTER_</span><span style="letter-spacing:-0.054px">70-58.60.201.72:18040: </span><span style="letter-spacing:-0.451px">ALIVE</span></div>
<div class="t f6" style="top:80.44px;left:24.40px"><span style="letter-spacing:-0.770px">DORIS_CLUSTER_</span><span style="letter-spacing:-0.054px">70-58.60.201.73:18040: </span><span style="letter-spacing:-0.451px">ALIVE</span></div>
<div class="t f6" style="top:98.75px;left:24.40px"><span style="letter-spacing:-0.770px">DORIS_CLUSTER_</span><span style="letter-spacing:-0.054px">70-58.60.201.74:18040: </span><span style="letter-spacing:-0.451px">ALIVE</span></div>
<div class="t f6" style="top:117.06px;left:24.40px"><span style="letter-spacing:-0.770px">DORIS_CLUSTER_</span><span style="letter-spacing:-0.054px">70-58.60.201.75:18040: </span><span style="letter-spacing:-0.451px">ALIVE</span></div>
<div class="t f6" style="top:135.37px;left:24.40px"><span style="letter-spacing:-0.770px">DORIS_CLUSTER_</span><span style="letter-spacing:-0.054px">85-58.60.201.81:18040: </span><span style="letter-spacing:-0.451px">ALIVE</span></div>
<div class="t f6" style="top:153.68px;left:24.40px"><span style="letter-spacing:-0.770px">DORIS_CLUSTER_</span><span style="letter-spacing:-0.054px">85-58.60.201.82:18040: </span><span style="letter-spacing:-0.451px">ALIVE</span></div>
<div class="t f6" style="top:171.99px;left:24.40px"><span style="letter-spacing:-0.770px">DORIS_CLUSTER_</span><span style="letter-spacing:-0.054px">85-58.60.201.83:18040: </span><span style="letter-spacing:-0.451px">ALIVE</span></div>
</div>
<div class="wm" style="left:-44.4px;top:57.8px"><b style="left:-7px">zhouqijin</b><b>hyxf</b><b style="left:7px">2023/03/10 19:08:43</b></div>
<div class="wm" style="left:96.6px;top:57.8px"><b style="left:-7px">zhouqijin</b><b>hyxf</b><b style="left:7px">2023/03/10 19:08:43</b></div>
<div class="wm" style="left:237.6px;top:57.8px"><b style="left:-7px">zhouqijin</b><b>hyxf</b><b style="left:7px">2023/03/10 19:08:43</b></div>
<div class="wm" style="left:378.6px;top:57.8px"><b style="left:-7px">zhouqijin</b><b>hyxf</b><b style="left:7px">2023/03/10 19:08:43</b></div>
<div class="wm" style="left:519.6px;top:57.8px"><b style="left:-7px">zhouqijin</b><b>hyxf</b><b style="left:7px">2023/03/10 19:08:43</b></div>
<div class="wm" style="left:660.6px;top:57.8px"><b style="left:-7px">zhouqijin</b><b>hyxf</b><b style="left:7px">2023/03/10 19:08:43</b></div>
<div class="wm" style="left:801.6px;top:57.8px"><b style="left:-7px">zhouqijin</b><b>hyxf</b><b style="left:7px">2023/03/10 19:08:43</b></div>
<div class="wm" style="left:942.6px;top:57.8px"><b style="left:-7px">zhouqijin</b><b>hyxf</b><b style="left:7px">2023/03/10 19:08:43</b></div>
<div class="wm" style="left:1083.6px;top:57.8px"><b style="left:-7px">zhouqijin</b><b>hyxf</b><b style="left:7px">2023/03/10 19:08:43</b></div>
<div class="wm" style="left:1224.6px;top:57.8px"><b style="left:-7px">zhouqijin</b><b>hyxf</b><b style="left:7px">2023/03/10 19:08:43</b></div>
<div class="wm" style="left:-44.4px;top:198.8px"><b style="left:-7px">zhouqijin</b><b>hyxf</b><b style="left:7px">2023/03/10 19:08:43</b></div>
<div class="wm" style="left:96.6px;top:198.8px"><b style="left:-7px">zhouqijin</b><b>hyxf</b><b style="left:7px">2023/03/10 19:08:43</b></div>
<div class="wm" style="left:237.6px;top:198.8px"><b style="left:-7px">zhouqijin</b><b>hyxf</b><b style="left:7px">2023/03/10 19:08:43</b></div>
<div class="wm" style="left:378.6px;top:198.8px"><b style="left:-7px">zhouqijin</b><b>hyxf</b><b style="left:7px">2023/03/10 19:08:43</b></div>
<div class="wm" style="left:519.6px;top:198.8px"><b style="left:-7px">zhouqijin</b><b>hyxf</b><b style="left:7px">2023/03/10 19:08:43</b></div>
<div class="wm" style="left:660.6px;top:198.8px"><b style="left:-7px">zhouqijin</b><b>hyxf</b><b style="left:7px">2023/03/10 19:08:43</b></div>
<div class="wm" style="left:801.6px;top:198.8px"><b style="left:-7px">zhouqijin</b><b>hyxf</b><b style="left:7px">2023/03/10 19:08:43</b></div>
<div class="wm" style="left:942.6px;top:198.8px"><b style="left:-7px">zhouqijin</b><b>hyxf</b><b style="left:7px">2023/03/10 19:08:43</b></div>
<div class="wm" style="left:1083.6px;top:198.8px"><b style="left:-7px">zhouqijin</b><b>hyxf</b><b style="left:7px">2023/03/10 19:08:43</b></div>
<div class="wm" style="left:1224.6px;top:198.8px"><b style="left:-7px">zhouqijin</b><b>hyxf</b><b style="left:7px">2023/03/10 19:08:43</b></div>
<div class="wm" style="left:-44.4px;top:339.8px"><b style="left:-7px">zhouqijin</b><b>hyxf</b><b style="left:7px">2023/03/10 19:08:43</b></div>
<div class="wm" style="left:96.6px;top:339.8px"><b style="left:-7px">zhouqijin</b><b>hyxf</b><b style="left:7px">2023/03/10 19:08:43</b></div>
<div class="wm" style="left:237.6px;top:339.8px"><b style="left:-7px">zhouqijin</b><b>hyxf</b><b style="left:7px">2023/03/10 19:08:43</b></div>
<div class="wm" style="left:378.6px;top:339.8px"><b style="left:-7px">zhouqijin</b><b>hyxf</b><b style="left:7px">2023/03/10 19:08:43</b></div>
<div class="wm" style="left:519.6px;top:339.8px"><b style="left:-7px">zhouqijin</b><b>hyxf</b><b style="left:7px">2023/03/10 19:08:43</b></div>
<div class="wm" style="left:660.6px;top:339.8px"><b style="left:-7px">zhouqijin</b><b>hyxf</b><b style="left:7px">2023/03/10 19:08:43</b></div>
<div class="wm" style="left:801.6px;top:339.8px"><b style="left:-7px">zhouqijin</b><b>hyxf</b><b style="left:7px">2023/03/10 19:08:43</b></div>
<div class="wm" style="left:942.6px;top:339.8px"><b style="left:-7px">zhouqijin</b><b>hyxf</b><b style="left:7px">2023/03/10 19:08:43</b></div>
<div class="wm" style="left:1083.6px;top:339.8px"><b style="left:-7px">zhouqijin</b><b>hyxf</b><b style="left:7px">2023/03/10 19:08:43</b></div>
<div class="wm" style="left:1224.6px;top:339.8px"><b style="left:-7px">zhouqijin</b><b>hyxf</b><b style="left:7px">2023/03/10 19:08:43</b></div>
<div class="wm" style="left:-44.4px;top:480.8px"><b style="left:-7px">zhouqijin</b><b>hyxf</b><b style="left:7px">2023/03/10 19:08:43</b></div>
<div class="wm" style="left:96.6px;top:480.8px"><b style="left:-7px">zhouqijin</b><b>hyxf</b><b style="left:7px">2023/03/10 19:08:43</b></div>
<div class="wm" style="left:237.6px;top:480.8px"><b style="left:-7px">zhouqijin</b><b>hyxf</b><b style="left:7px">2023/03/10 19:08:43</b></div>
<div class="wm" style="left:378.6px;top:480.8px"><b style="left:-7px">zhouqijin</b><b>hyxf</b><b style="left:7px">2023/03/10 19:08:43</b></div>
<div class="wm" style="left:519.6px;top:480.8px"><b style="left:-7px">zhouqijin</b><b>hyxf</b><b style="left:7px">2023/03/10 19:08:43</b></div>
<div class="wm" style="left:660.6px;top:480.8px"><b style="left:-7px">zhouqijin</b><b>hyxf</b><b style="left:7px">2023/03/10 19:08:43</b></div>
<div class="wm" style="left:801.6px;top:480.8px"><b style="left:-7px">zhouqijin</b><b>hyxf</b><b style="left:7px">2023/03/10 19:08:43</b></div>
<div class="wm" style="left:942.6px;top:480.8px"><b style="left:-7px">zhouqijin</b><b>hyxf</b><b style="left:7px">2023/03/10 19:08:43</b></div>
<div class="wm" style="left:1083.6px;top:480.8px"><b style="left:-7px">zhouqijin</b><b>hyxf</b><b style="left:7px">2023/03/10 19:08:43</b></div>
<div class="wm" style="left:1224.6px;top:480.8px"><b style="left:-7px">zhouqijin</b><b>hyxf</b><b style="left:7px">2023/03/10 19:08:43</b></div>
</body></html>
